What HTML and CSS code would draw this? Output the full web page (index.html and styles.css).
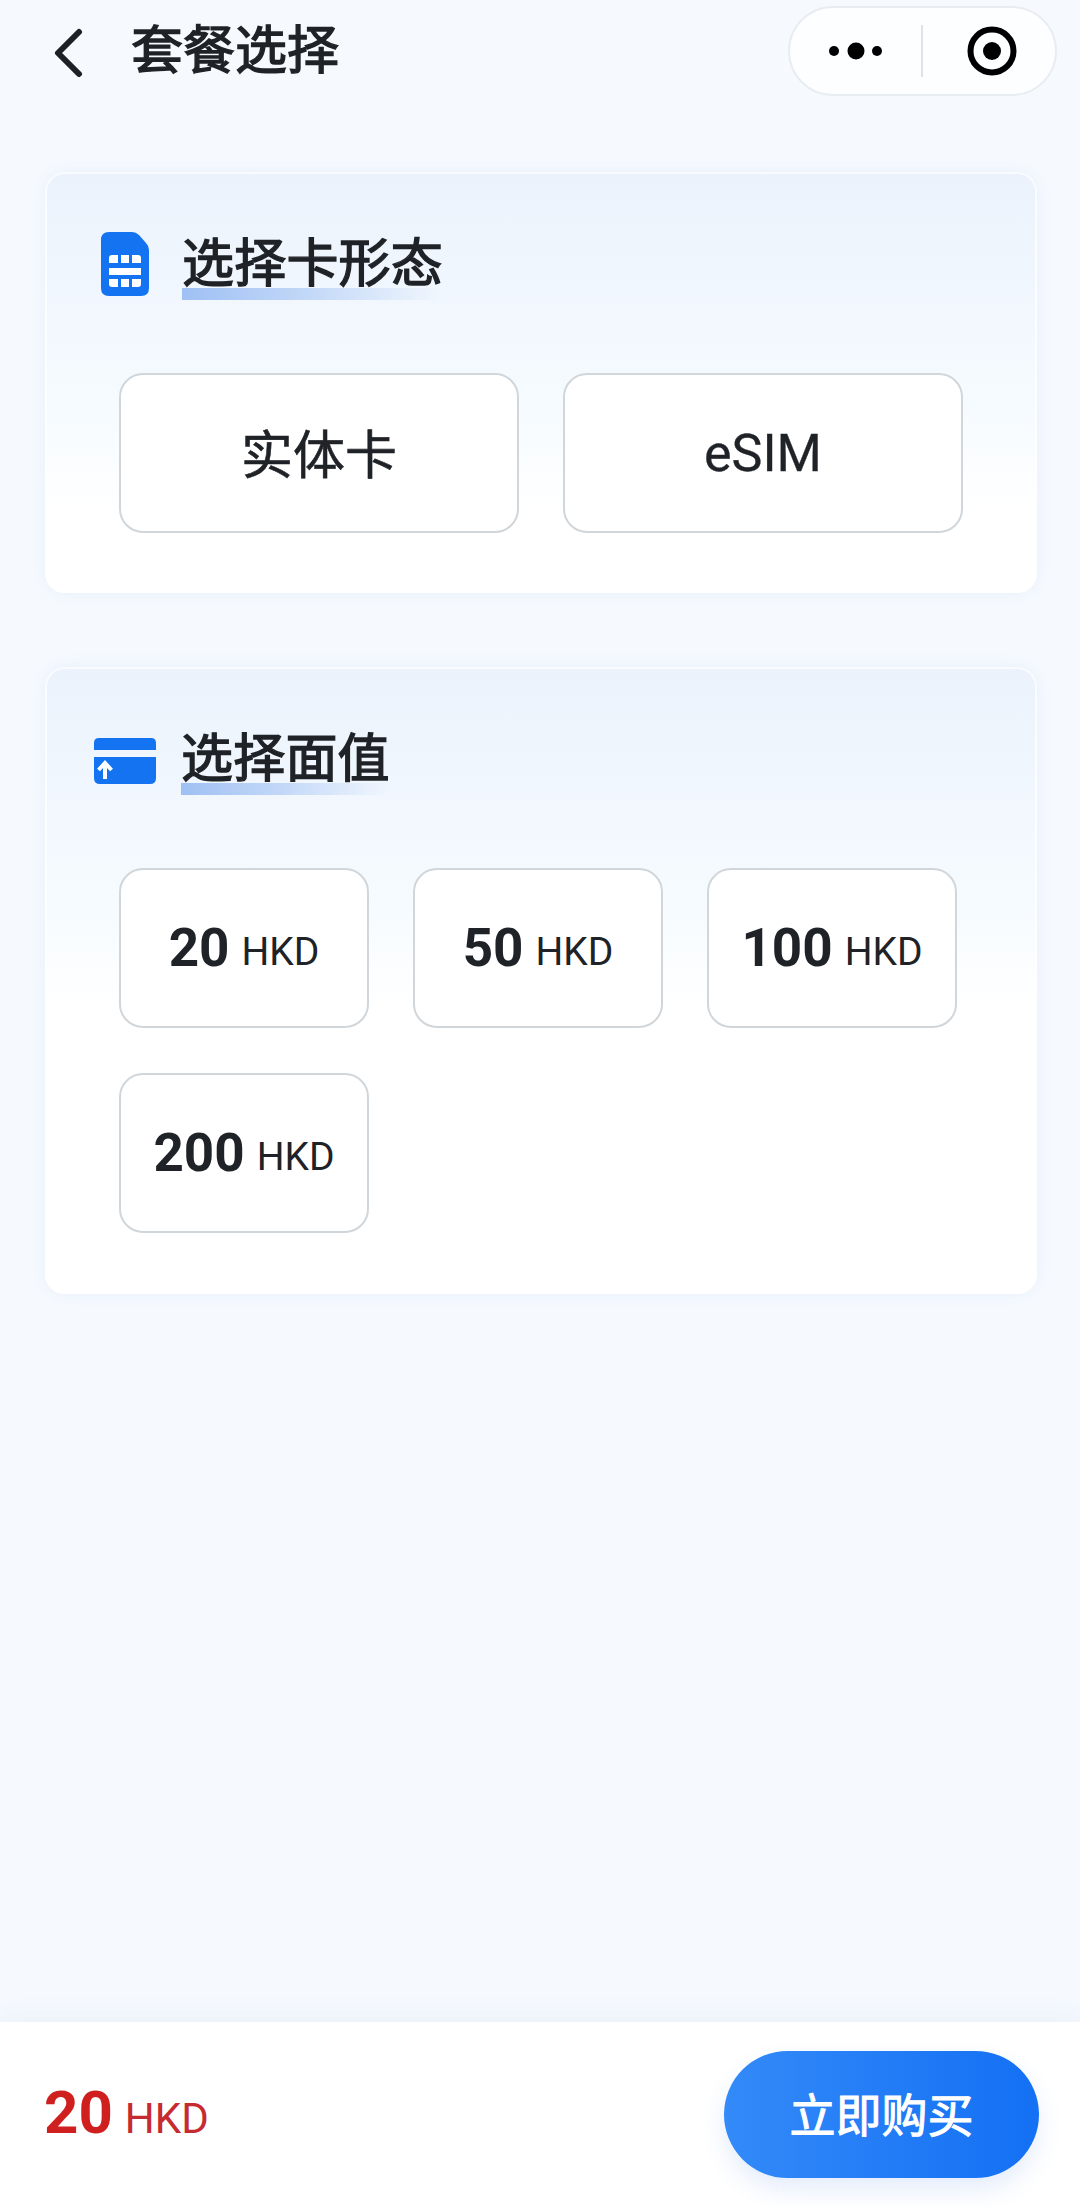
FILE: index.html
```html
<!DOCTYPE html>
<html lang="zh-CN">
<head>
    <meta charset="UTF-8">
    <title>套餐选择</title>
    <link rel="stylesheet" href="styles.css">
</head>
<body>
    <header class="nav">
        <svg class="nav-back" width="32" height="50" viewBox="0 0 32 50"><path d="M27 4 L6 25 L27 46" fill="none" stroke="#1d2125" stroke-width="6" stroke-linecap="round" stroke-linejoin="round"/></svg>
        <h1 class="nav-title">套餐选择</h1>
        <div class="capsule">
            <svg width="54" height="18" viewBox="0 0 54 18"><circle cx="5" cy="9" r="5" fill="#000"/><circle cx="27" cy="9" r="8.5" fill="#000"/><circle cx="48" cy="9" r="5" fill="#000"/></svg>
            <span class="capsule-line"></span>
            <svg width="50" height="50" viewBox="0 0 50 50"><circle cx="25" cy="25" r="21.5" fill="none" stroke="#000" stroke-width="6"/><circle cx="25" cy="25" r="9" fill="#000"/></svg>
        </div>
    </header>

    <main class="content">
        <section class="card card-form">
            <div class="card-head">
                <svg class="sim-icon" width="48" height="64" viewBox="0 0 48 64">
                    <path d="M8 0 H31 Q35 0 38 3 L45 11 Q48 14 48 18 V56 Q48 64 40 64 H8 Q0 64 0 56 V8 Q0 0 8 0 Z" fill="#1473f0"/>
                    <path d="M8 26 Q8 23 11 23 H17 V31 H8 Z M20 23 H28 V31 H20 Z M31 23 H37 Q40 23 40 26 V31 H31 Z M8 36 H40 V43 H8 Z M8 47 H17 V55 H11 Q8 55 8 52 Z M20 47 H28 V55 H20 Z M31 47 H40 V52 Q40 55 37 55 H31 Z" fill="#fff"/>
                </svg>
                <h2 class="card-title">选择卡形态</h2>
            </div>
            <div class="form-row">
                <div class="chip chip-form">实体卡</div>
                <div class="chip chip-form chip-latin">eSIM</div>
            </div>
        </section>

        <section class="card card-value">
            <div class="card-head">
                <svg class="bill-icon" width="62" height="46" viewBox="0 0 62 46">
                    <path d="M5 0 H57 Q62 0 62 5 V12 H0 V5 Q0 0 5 0 Z M0 19 H62 V40 Q62 46 56 46 H6 Q0 46 0 40 Z" fill="#1473f0"/>
                    <path d="M11 41 V26 M4.5 32 L11 25 L17.5 32" fill="none" stroke="#fff" stroke-width="4"/>
                </svg>
                <h2 class="card-title">选择面值</h2>
            </div>
            <div class="value-grid">
                <div class="chip"><b>20</b> <span>HKD</span></div>
                <div class="chip"><b>50</b> <span>HKD</span></div>
                <div class="chip"><b>100</b> <span>HKD</span></div>
                <div class="chip"><b>200</b> <span>HKD</span></div>
            </div>
        </section>
    </main>

    <footer class="bar">
        <div class="price"><b>20</b> <span>HKD</span></div>
        <button class="buy">立即购买</button>
    </footer>
</body>
</html>
```

FILE: styles.css
```css
* {
    box-sizing: border-box;
}
body {
    margin: 0;
    height: 2206px;
    display: flex;
    flex-direction: column;
    background-color: #f6faff;
    color: #1f2226;
    font-family: Roboto, "Noto Sans CJK SC", sans-serif;
}
.nav {
    height: 172px;
    flex: none;
    display: flex;
    align-items: flex-start;
    padding: 6px 23px 0 52px;
}
.nav-back {
    margin-top: 22px;
}
.nav-title {
    margin: 10px 0 0 47px;
    font-size: 52px;
    line-height: 72px;
    font-weight: 400;
    -webkit-text-stroke: 1.4px #1f2226;
}
.capsule {
    margin-left: auto;
    width: 269px;
    height: 90px;
    display: flex;
    align-items: center;
    padding: 0 0 0 39px;
    background-color: #fdfeff;
    border: 2px solid #e8edf1;
    border-radius: 45px;
}
.capsule-line {
    width: 2px;
    height: 52px;
    margin: 0 44px 0 38px;
    background-color: #dfe3e6;
}
.content {
    flex: 1;
    padding: 0 43px 0 45px;
    display: flex;
    flex-direction: column;
    gap: 74px;
}
.card {
    isolation: isolate;
    border-radius: 20px;
    background: linear-gradient(#ebf2fc 0, #eff5fd 70px, #f6fbff 240px, #fff 340px);
    box-shadow: 0 0 16px rgba(170, 195, 230, 0.18), inset 0 0 0 2px rgba(255, 255, 255, 0.7);
    padding: 0 0 60px 74px;
}
.card-value {
    padding-bottom: 61px;
}
.card-head {
    height: 201px;
    display: flex;
    align-items: center;
}
.sim-icon {
    margin: 0 0 18px -18px;
}
.bill-icon {
    margin: 0 0 14px -25px;
}
.card-title {
    position: relative;
    margin: 0 0 15px 33px;
    font-size: 52px;
    line-height: 72px;
    font-weight: 400;
    letter-spacing: 0.2px;
    -webkit-text-stroke: 1.4px #1f2226;
}
.bill-icon + .card-title {
    margin-left: 25px;
}
.card-title::after {
    content: "";
    position: absolute;
    left: 0;
    right: 0;
    bottom: 1px;
    height: 12px;
    background: linear-gradient(90deg, #9fc0f4, #c4d9f8 50%, rgba(235, 243, 254, 0));
    z-index: -1;
}
.form-row {
    display: flex;
    gap: 44px;
}
.chip {
    height: 160px;
    display: flex;
    align-items: center;
    justify-content: center;
    gap: 12px;
    background-color: #fff;
    border: 2.5px solid #d0d6da;
    border-radius: 24px;
}
.chip-form {
    width: 400px;
    padding-bottom: 4px;
    font-size: 52px;
    -webkit-text-stroke: 0.6px #1f2226;
}
.chip-latin {
    padding-bottom: 0;
    -webkit-text-stroke: 0.3px #1f2226;
}
.value-grid {
    display: grid;
    grid-template-columns: repeat(3, 250px);
    gap: 45px 44px;
}
.chip b {
    font-size: 53px;
    font-weight: 700;
}
.chip span {
    font-size: 39px;
    margin-top: 8px;
}
.bar {
    height: 184px;
    flex: none;
    display: flex;
    align-items: center;
    justify-content: space-between;
    padding: 0 41px 0 44px;
    background-color: #fff;
    box-shadow: 0 -10px 20px rgba(220, 228, 240, 0.3);
}
.price {
    display: flex;
    align-items: baseline;
    gap: 12px;
    color: #cf1f1f;
    margin-top: -4px;
}
.price b {
    font-size: 60px;
    font-weight: 700;
}
.price span {
    font-size: 42px;
    color: #c52b30;
}
.buy {
    width: 315px;
    height: 127px;
    padding: 0 0 4px;
    border: none;
    border-radius: 64px;
    background: linear-gradient(90deg, #338af8, #1470f4);
    color: #fff;
    font-family: inherit;
    font-size: 46px;
    font-weight: 400;
    -webkit-text-stroke: 1px #fff;
    box-shadow: 0 12px 24px rgba(40, 110, 220, 0.12);
}
```
